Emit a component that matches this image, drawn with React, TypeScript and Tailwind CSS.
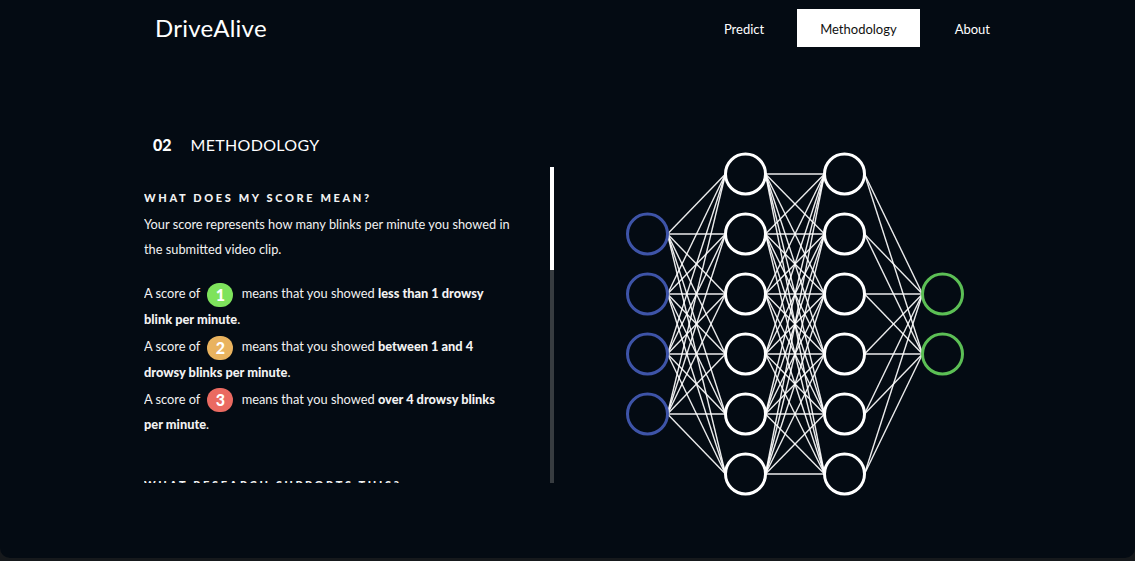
import React from 'react';

const font = { fontFamily: 'Lato, "Open Sans", sans-serif' };

const R = 20;
const cols = [
  { x: 32.5, ys: [84, 144, 204, 264], color: '#3e54a8' },
  { x: 130.5, ys: [24, 84, 144, 204, 264, 324], color: '#ffffff' },
  { x: 229.5, ys: [24, 84, 144, 204, 264, 324], color: '#ffffff' },
  { x: 327.5, ys: [144, 204], color: '#5cbf55' },
];

const Network: React.FC = () => {
  const lines: React.ReactNode[] = [];
  for (let c = 0; c < cols.length - 1; c++) {
    const a = cols[c];
    const b = cols[c + 1];
    a.ys.forEach((y1, i) =>
      b.ys.forEach((y2, j) => {
        lines.push(
          <line
            key={`${c}-${i}-${j}`}
            x1={a.x + R}
            y1={y1}
            x2={b.x - R}
            y2={y2}
            stroke="#ffffff"
            strokeWidth={1.4}
            opacity={0.92}
          />
        );
      })
    );
  }
  return (
    <svg width="360" height="350" viewBox="0 0 360 350" className="mt-[15px] ml-[61px] shrink-0">
      {lines}
      {cols.map((col, c) =>
        col.ys.map((y, i) => (
          <circle key={`n${c}-${i}`} cx={col.x} cy={y} r={R} fill="#040b13" stroke={col.color} strokeWidth={3} />
        ))
      )}
    </svg>
  );
};

const Badge: React.FC<{ n: string; bg: string }> = ({ n, bg }) => (
  <span
    className={`inline-flex items-center justify-center w-[26px] h-[24px] rounded-full ${bg} text-white font-black text-[16px] leading-none ml-[4px] mr-[5px] align-middle`}
  >
    {n}
  </span>
);

const App: React.FC = () => {
  return (
    <div className="w-full h-[561px] bg-[#16191c]" style={font}>
      <div className="h-[558px] bg-[#040b13] rounded-b-[10px] overflow-hidden text-white">
        <header className="h-[56px] flex items-start justify-between pl-[155px] pr-[122px] pt-[9px]">
          <div className="text-[24px] font-normal tracking-[0.01em] leading-[38px]">DriveAlive</div>
          <nav className="flex items-center text-[13px] leading-none">
            <a className="px-[23px] h-[38px] flex items-center pt-[2px] -ml-[3px]">Predict</a>
            <a className="ml-[10px] px-[23px] h-[38px] flex items-center pt-[2px] bg-white text-[#111]">Methodology</a>
            <a className="ml-[12px] px-[23px] h-[38px] flex items-center pt-[2px]">About</a>
          </nav>
        </header>

        <section className="flex items-start pt-[79px] pl-[144px]">
          <div>
            <div className="flex items-center h-[20px] pl-[9px] text-[16px]">
              <span className="font-black">02</span>
              <span className="ml-[19px] tracking-[0.02em]">METHODOLOGY</span>
            </div>
            <div className="flex mt-[12px]">
              <div className="w-[406px] h-[316px] overflow-hidden pt-[24px]">
                <div className="w-[366px] text-[12.8px] leading-[25px] text-[#f2f2f2]">
                  <h3 className="text-[11px] font-black tracking-[0.24em] leading-[14px] mb-[7px]">
                    WHAT DOES MY SCORE MEAN?
                  </h3>
                  <p>Your score represents how many blinks per minute you showed in the submitted video clip.</p>
                  <p className="mt-[19px]">
                    A score of <Badge n="1" bg="bg-[#7ee35c]" /> means that you showed{' '}
                    <b className="font-black">less than 1 drowsy blink per minute</b>.
                  </p>
                  <p className="mt-[2px]">
                    A score of <Badge n="2" bg="bg-[#e9b35f]" /> means that you showed{' '}
                    <b className="font-black">between 1 and 4 drowsy blinks per minute</b>.
                  </p>
                  <p className="mt-[2px]">
                    A score of <Badge n="3" bg="bg-[#ea6a61]" /> means that you showed{' '}
                    <b className="font-black">over 4 drowsy blinks per minute</b>.
                  </p>
                  <h3 className="mt-[41px] text-[11px] font-black tracking-[0.24em] leading-[14px]">
                    WHAT RESEARCH SUPPORTS THIS?
                  </h3>
                </div>
              </div>
              <div className="w-[4px] h-[316px] bg-[#373c40] flex flex-col">
                <div className="h-[103px] bg-white" />
              </div>
            </div>
          </div>
          <Network />
        </section>
      </div>
    </div>
  );
};

export default App;
